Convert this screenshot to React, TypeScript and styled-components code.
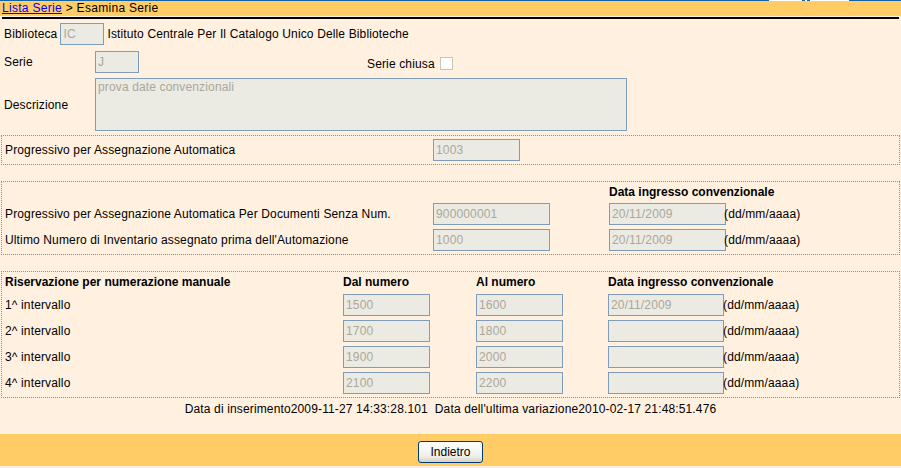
import styled, { createGlobalStyle } from "styled-components";

const GlobalStyle = createGlobalStyle`
  html, body {
    margin: 0;
    padding: 0;
    background: #fff0e0;
  }
  body {
    font-family: "Liberation Sans", Arial, sans-serif;
    font-size: 12px;
    letter-spacing: 0.14px;
    color: #000;
  }
`;

type Reservation = {
  label: string;
  from: string;
  to: string;
  date: string;
};

const reservations: Reservation[] = [
  { label: "1^ intervallo", from: "1500", to: "1600", date: "20/11/2009" },
  { label: "2^ intervallo", from: "1700", to: "1800", date: "" },
  { label: "3^ intervallo", from: "1900", to: "2000", date: "" },
  { label: "4^ intervallo", from: "2100", to: "2200", date: "" },
];

export default function App() {
  return (
    <>
      <GlobalStyle />
      <Page>
        <TopStrip>
          <StripPart $width={769} $color="#1262a8" />
          <StripPart $width={33} $color="#ffffff" />
          <StripPart $width={3} $color="#1262a8" />
          <StripPart $width={2} $color="#ffffff" />
          <StripPart $width={3} $color="#1262a8" />
          <StripPart $width={39} $color="#ffffff" />
          <StripPart $width={52} $color="#1262a8" />
        </TopStrip>

        <Breadcrumb>
          <CrumbLink href="#">Lista Serie</CrumbLink> &gt; Esamina Serie
        </Breadcrumb>
        <BlackRule />

        <HeaderForm>
          <HeaderRow>
            <Label>Biblioteca</Label>
            <Field $width={44}>IC</Field>
            <span>Istituto Centrale Per Il Catalogo Unico Delle Biblioteche</span>
          </HeaderRow>
          <HeaderRow $gap={6}>
            <Label $width={91}>Serie</Label>
            <Field $width={44}>J</Field>
            <ClosedFlag>
              Serie chiusa <Checkbox />
            </ClosedFlag>
          </HeaderRow>
          <HeaderRow $gap={5}>
            <Label $width={91}>Descrizione</Label>
            <TextArea>prova date convenzionali</TextArea>
          </HeaderRow>
        </HeaderForm>

        <DottedBox $marginTop={4}>
          <SingleRow>
            <span>Progressivo per Assegnazione Automatica</span>
            <Field $width={87}>1003</Field>
          </SingleRow>
        </DottedBox>

        <DottedBox $marginTop={16}>
          <AutoGrid>
            <HeadCell $height={14} />
            <HeadCell $height={14} />
            <HeadCell $height={14}>Data ingresso convenzionale</HeadCell>
            <HeadCell $height={14} />

            <RowLabel>Progressivo per Assegnazione Automatica Per Documenti Senza Num.</RowLabel>
            <Field $width={117}>900000001</Field>
            <Field $width={117}>20/11/2009</Field>
            <Unit>(dd/mm/aaaa)</Unit>

            <RowLabel>Ultimo Numero di Inventario assegnato prima dell'Automazione</RowLabel>
            <Field $width={117}>1000</Field>
            <Field $width={117}>20/11/2009</Field>
            <Unit>(dd/mm/aaaa)</Unit>
          </AutoGrid>
        </DottedBox>

        <DottedBox $marginTop={16}>
          <ManualGrid>
            <HeadCell $height={15}>Riservazione per numerazione manuale</HeadCell>
            <HeadCell $height={15}>Dal numero</HeadCell>
            <HeadCell $height={15}>Al numero</HeadCell>
            <HeadCell $height={15}>Data ingresso convenzionale</HeadCell>
            <HeadCell $height={15} />

            {reservations.map((r) => (
              <ReservationRow key={r.label} row={r} />
            ))}
          </ManualGrid>
        </DottedBox>

        <Timestamps>
          Data di inserimento2009-11-27 14:33:28.101&nbsp; Data dell'ultima variazione2010-02-17 21:48:51.476
        </Timestamps>

        <ButtonBar>
          <Button type="button">Indietro</Button>
        </ButtonBar>
      </Page>
    </>
  );
}

function ReservationRow({ row }: { row: Reservation }) {
  return (
    <>
      <RowLabel>{row.label}</RowLabel>
      <Field $width={87}>{row.from}</Field>
      <Field $width={87}>{row.to}</Field>
      <Field $width={116}>{row.date}</Field>
      <Unit>(dd/mm/aaaa)</Unit>
    </>
  );
}

const Page = styled.div`
  width: 901px;
  height: 468px;
  overflow: hidden;
`;

const TopStrip = styled.div`
  display: flex;
  height: 1px;
`;

const StripPart = styled.div<{ $width: number; $color: string }>`
  width: ${({ $width }) => $width}px;
  flex: none;
  background: ${({ $color }) => $color};
`;

const Breadcrumb = styled.div`
  height: 15px;
  line-height: 15px;
  padding-left: 2px;
  background: #ffcc66;
  color: #000;
  letter-spacing: 0.3px;
`;

const CrumbLink = styled.a`
  color: #0000ff;
  text-decoration: underline;
`;

const BlackRule = styled.div`
  height: 2px;
  margin: 1px 2px 0;
  background: #000;
`;

const HeaderForm = styled.div`
  display: flex;
  flex-direction: column;
  padding: 4px 0 0 4px;
`;

const HeaderRow = styled.div<{ $gap?: number }>`
  display: flex;
  align-items: center;
  margin-top: ${({ $gap }) => $gap ?? 0}px;
`;

const Label = styled.span<{ $width?: number }>`
  flex: none;
  width: ${({ $width }) => ($width ? `${$width}px` : "auto")};
  margin-right: ${({ $width }) => ($width ? "0" : "3px")};
`;

const Field = styled.div<{ $width: number }>`
  box-sizing: border-box;
  flex: none;
  width: ${({ $width }) => $width}px;
  height: 22px;
  line-height: 20px;
  padding-left: 2px;
  margin-right: 3px;
  border: 1px solid #7f9db9;
  background: #ebeae3;
  color: #aca899;
  white-space: nowrap;
  overflow: hidden;
`;

const ClosedFlag = styled.span`
  display: flex;
  align-items: center;
  gap: 5px;
  margin-left: 225px;
  padding-top: 3px;
`;

const Checkbox = styled.span`
  box-sizing: border-box;
  width: 13px;
  height: 13px;
  border: 1px solid #c9c6b8;
  background: #fff;
`;

const TextArea = styled.div`
  box-sizing: border-box;
  width: 532px;
  height: 53px;
  padding: 1px 2px;
  border: 1px solid #7f9db9;
  background: #ebeae3;
  color: #aca899;
`;

const DottedBox = styled.div<{ $marginTop: number }>`
  box-sizing: border-box;
  width: 899px;
  margin: ${({ $marginTop }) => $marginTop}px 0 0 1px;
  padding: 3px 0 3px 3px;
  border: 1px dotted #6f93ce;
`;

const SingleRow = styled.div`
  display: grid;
  grid-template-columns: 428px auto;
  align-items: center;
  justify-content: start;
`;

const AutoGrid = styled.div`
  display: grid;
  grid-template-columns: 428px 176px 117px auto;
  row-gap: 4px;
  align-items: center;
  justify-content: start;
`;

const ManualGrid = styled.div`
  display: grid;
  grid-template-columns: 338px 133px 132px 117px auto;
  row-gap: 4px;
  align-items: center;
  justify-content: start;
`;

const HeadCell = styled.div<{ $height: number }>`
  height: ${({ $height }) => $height}px;
  line-height: ${({ $height }) => $height}px;
  font-weight: bold;
  letter-spacing: 0;
  white-space: nowrap;
`;

const RowLabel = styled.span`
  white-space: nowrap;
`;

const Unit = styled.span`
  margin-left: -2px;
  white-space: nowrap;
`;

const Timestamps = styled.div`
  margin-top: 3px;
  height: 16px;
  line-height: 16px;
  text-align: center;
`;

const ButtonBar = styled.div`
  display: flex;
  justify-content: center;
  margin-top: 17px;
  height: 32px;
  padding-top: 7px;
  box-sizing: border-box;
  background: #ffcc66;
`;

const Button = styled.button`
  box-sizing: border-box;
  width: 65px;
  height: 22px;
  padding: 0;
  border: 1px solid #003c74;
  border-radius: 3px;
  background: linear-gradient(#ffffff, #f0f0ea 70%, #d6d0c5);
  font-family: "Liberation Sans", Arial, sans-serif;
  font-size: 12px;
  color: #000;
`;
